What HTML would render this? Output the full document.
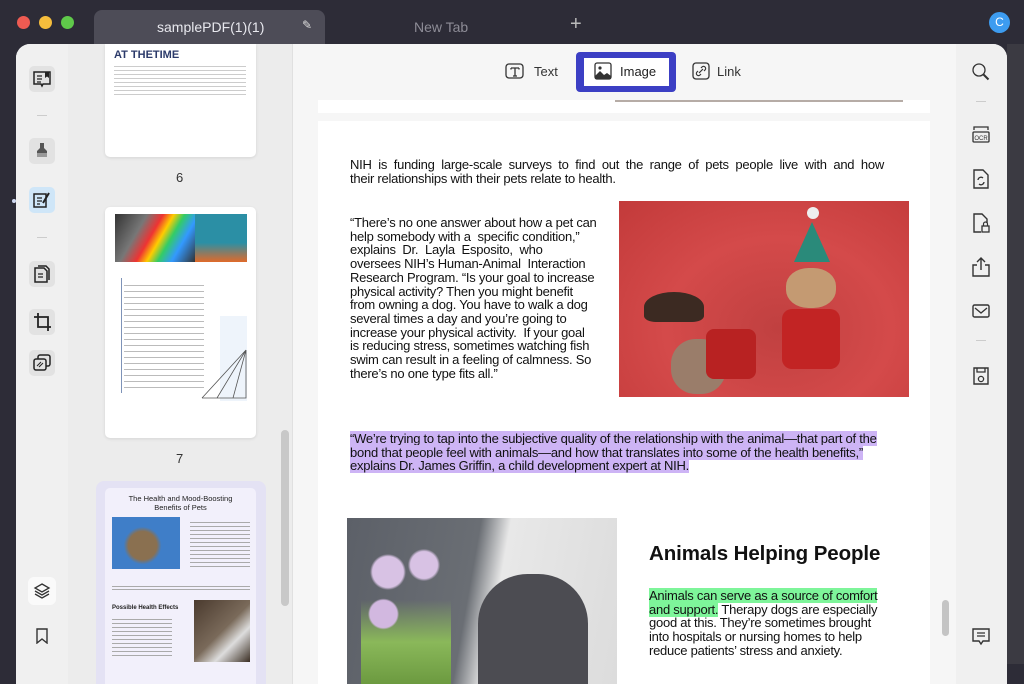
<!DOCTYPE html>
<html><head><meta charset="utf-8"><style>
*{box-sizing:border-box;margin:0;padding:0}
body{width:1024px;height:664px;overflow:hidden;background:#2d2c37;font-family:"Liberation Sans",Arial,sans-serif;position:relative}
.abs{position:absolute}
.dot{position:absolute;top:16px;width:13px;height:13px;border-radius:50%}
.win{position:absolute;left:16px;top:44px;width:991px;height:640px;background:#f1f1f1;border-radius:14px 14px 0 0;overflow:hidden}
.ico{position:absolute;width:26px;height:26px;border-radius:5px;background:#e2e2e2}
svg{position:absolute}
.p{position:absolute;font-size:13px;line-height:13.7px;color:#111;letter-spacing:-0.25px;white-space:nowrap}
.j{text-align:justify;text-align-last:justify;white-space:normal}
</style></head><body>
<div class="dot" style="left:17px;background:#ee5b52"></div>
<div class="dot" style="left:39px;background:#f5bd3c"></div>
<div class="dot" style="left:61px;background:#5fc94a"></div>
<div class="abs" style="left:94px;top:10px;width:231px;height:36px;background:#4d4c57;border-radius:8px 8px 0 0"></div>
<div class="abs" style="left:157px;top:19px;color:#e8e8ee;font-size:14px">samplePDF(1)(1)</div>
<div class="abs" style="left:302px;top:18px;color:#ddd;font-size:12px">✎</div>
<div class="abs" style="left:414px;top:19px;color:#8d8c96;font-size:14px">New Tab</div>
<div class="abs" style="left:570px;top:13px;color:#bbb;font-size:20px">+</div>
<div class="abs" style="left:989px;top:12px;width:21px;height:21px;border-radius:50%;background:#3d9cf0;color:#fff;font-size:12px;text-align:center;line-height:21px">C</div>
<div class="abs" style="left:12px;top:199px;width:4px;height:4px;border-radius:50%;background:#cfd8f0"></div>

<div class="win">
 <div class="abs" style="left:0;top:0;width:52px;height:640px;background:#f0f0f0"></div>
 <div class="ico" style="left:13px;top:22px"></div>
 <svg style="left:16px;top:26px" width="20" height="18" viewBox="0 0 20 18"><path d="M2 2h16v12H11l-1 2-1-2H2z" fill="none" stroke="#222" stroke-width="1.5"/><path d="M5 6h5M5 9h5M5 12h4" stroke="#222" stroke-width="1.3"/><path d="M13 2h4v6l-2-1.5-2 1.5z" fill="#222"/></svg>
 <div class="abs" style="left:21px;top:71px;width:10px;height:1px;background:#ccc"></div>
 <div class="ico" style="left:13px;top:94px"></div>
 <svg style="left:17px;top:97px" width="18" height="20" viewBox="0 0 18 20"><path d="M7 2l4 0 0 5 3 3v6H4v-6l3-3z" fill="#555"/><path d="M4 12h10v4H4z" fill="#999"/></svg>
 <div class="ico" style="left:13px;top:143px;background:#cfe6f8"></div>
 <svg style="left:16px;top:147px" width="20" height="18" viewBox="0 0 20 18"><path d="M2 3h12v13H2z" fill="none" stroke="#222" stroke-width="1.5"/><path d="M5 7h5M5 10h5M5 13h3" stroke="#222" stroke-width="1.3"/><path d="M11 12l6-10" stroke="#222" stroke-width="2"/></svg>
 <div class="abs" style="left:21px;top:193px;width:10px;height:1px;background:#ccc"></div>
 <div class="ico" style="left:13px;top:217px"></div>
 <svg style="left:17px;top:220px" width="18" height="20" viewBox="0 0 18 20"><path d="M2 4h9l3 3v11H2z" fill="none" stroke="#222" stroke-width="1.5"/><path d="M5 2h8l3 3v11" fill="none" stroke="#222" stroke-width="1.5"/><path d="M5 10h5M5 13h5" stroke="#222" stroke-width="1.3"/></svg>
 <div class="ico" style="left:13px;top:265px"></div>
 <svg style="left:17px;top:268px" width="20" height="20" viewBox="0 0 20 20"><path d="M5 1v14h13M1 5h14v14" fill="none" stroke="#222" stroke-width="1.8"/></svg>
 <div class="ico" style="left:13px;top:306px"></div>
 <svg style="left:16px;top:310px" width="20" height="18" viewBox="0 0 20 18"><rect x="6" y="1" width="12" height="11" rx="2" fill="none" stroke="#222" stroke-width="1.5"/><rect x="2" y="5" width="12" height="11" rx="2" fill="#e2e2e2" stroke="#222" stroke-width="1.5"/><path d="M5 12l4-4M7 13l4-4" stroke="#222" stroke-width="1"/></svg>
 <div class="abs" style="left:12px;top:533px;width:28px;height:28px;border-radius:6px;background:#fafafa"></div>
 <svg style="left:17px;top:538px" width="18" height="18" viewBox="0 0 18 18"><path d="M9 2l7 4-7 4-7-4z M2 9l7 4 7-4 M2 12l7 4 7-4" fill="none" stroke="#333" stroke-width="1.3"/></svg>
 <svg style="left:20px;top:584px" width="12" height="16" viewBox="0 0 12 16"><path d="M1 1h10v14l-5-4-5 4z" fill="none" stroke="#333" stroke-width="1.4"/></svg>

 <div class="abs" style="left:52px;top:0;width:224px;height:640px;background:#ececec"></div>
 <div class="abs" style="left:89px;top:0;width:151px;height:113px;background:#fff;border-radius:0 0 5px 5px;box-shadow:0 1px 3px rgba(0,0,0,.1)"></div>
 <div class="abs" style="left:98px;top:5px;font-size:11px;font-weight:bold;color:#2b3a6a">AT THETIME</div>
 <div class="abs" style="left:98px;top:20px;width:132px;height:32px;background:repeating-linear-gradient(#fff 0 2px,#ccc 2px 3px,#fff 3px 4px)"></div>
 <div class="abs" style="left:160px;top:126px;font-size:13px;color:#333">6</div>
 <div class="abs" style="left:89px;top:163px;width:151px;height:231px;background:#fff;border-radius:5px;box-shadow:0 1px 3px rgba(0,0,0,.1)"></div>
 <div class="abs" style="left:99px;top:170px;width:80px;height:48px;background:linear-gradient(120deg,#333,#777 30%,#e33 45%,#fc0 55%,#3c6 65%,#39f 78%,#333)"></div>
 <div class="abs" style="left:179px;top:170px;width:52px;height:48px;background:linear-gradient(#2b8fa5 60%,#e06a2a)"></div>
 <div class="abs" style="left:105px;top:234px;width:1px;height:115px;background:#7e93b8"></div>
 <div class="abs" style="left:108px;top:238px;width:80px;height:110px;background:repeating-linear-gradient(#fff 0 3px,#bbb 3px 4px,#fff 4px 6px)"></div>
 <div class="abs" style="left:204px;top:272px;width:27px;height:85px;background:#eef4fb"></div>
 <svg style="left:184px;top:300px" width="48" height="58"><path d="M2 54L46 6 M17 54L46 6 M33 54L46 6 M2 54H46V6" fill="none" stroke="#555" stroke-width="0.8"/></svg>
 <div class="abs" style="left:160px;top:407px;font-size:13px;color:#333">7</div>
 <div class="abs" style="left:80px;top:437px;width:170px;height:210px;background:#e4e2f4;border-radius:8px"></div>
 <div class="abs" style="left:89px;top:444px;width:151px;height:200px;background:#f2f0fb;border-radius:5px"></div>
 <div class="abs" style="left:89px;top:450px;width:151px;text-align:center;font-size:7.5px;line-height:9px;color:#222">The Health and Mood-Boosting<br>Benefits of Pets</div>
 <div class="abs" style="left:96px;top:473px;width:68px;height:52px;background:radial-gradient(circle at 45% 55%,#8a7050 0 30%,#3f7ec8 40%)"></div>
 <div class="abs" style="left:174px;top:476px;width:60px;height:50px;background:repeating-linear-gradient(#f2f0fb 0 2px,#aaa 2px 3px,#f2f0fb 3px 4px)"></div>
 <div class="abs" style="left:96px;top:540px;width:138px;height:6px;background:repeating-linear-gradient(#f2f0fb 0 2px,#aaa 2px 3px)"></div>
 <div class="abs" style="left:96px;top:561px;font-size:6px;font-weight:bold;color:#222">Possible Health Effects</div>
 <div class="abs" style="left:96px;top:573px;width:60px;height:40px;background:repeating-linear-gradient(#f2f0fb 0 2px,#aaa 2px 3px,#f2f0fb 3px 4px)"></div>
 <div class="abs" style="left:178px;top:556px;width:56px;height:62px;background:linear-gradient(135deg,#4a3a2e,#7a6a5a 50%,#ddd 70%,#3a2d22)"></div>
 <div class="abs" style="left:265px;top:386px;width:8px;height:176px;border-radius:4px;background:#c8c8c8"></div>
 <div class="abs" style="left:276px;top:0;width:1px;height:640px;background:#e0e0e0"></div>

 <div class="abs" style="left:277px;top:0;width:663px;height:640px;background:#f6f6f6"></div>
 <svg style="left:489px;top:18px" width="20" height="18" viewBox="0 0 20 18"><rect x="1" y="2" width="17" height="14" rx="3" fill="none" stroke="#333" stroke-width="1.3"/><path d="M6 6h8M10 6v8M8 14h4M6 6v1.5M14 6v1.5" stroke="#333" stroke-width="1.3" fill="none"/></svg>
 <div class="abs" style="left:518px;top:20px;font-size:13px;color:#333">Text</div>
 <div class="abs" style="left:560px;top:8px;width:100px;height:40px;background:#3c3fc4;border-radius:4px"></div>
 <div class="abs" style="left:568px;top:14px;width:85px;height:28px;background:#fff"></div>
 <svg style="left:578px;top:18px" width="18" height="18" viewBox="0 0 18 18"><rect x="1" y="1" width="16" height="16" rx="2" fill="none" stroke="#333" stroke-width="1.3"/><path d="M1 14l5-5 4 4 3-2 4 3v3H1z" fill="#333"/><circle cx="6" cy="6" r="1.6" fill="#333"/></svg>
 <div class="abs" style="left:604px;top:20px;font-size:13px;color:#222">Image</div>
 <svg style="left:676px;top:18px" width="18" height="18" viewBox="0 0 18 18"><rect x="1" y="1" width="16" height="16" rx="3" fill="none" stroke="#333" stroke-width="1.3"/><path d="M7 11l4-4M6 9l-1 1a2 2 0 003 3l1-1M12 9l1-1a2 2 0 00-3-3l-1 1" fill="none" stroke="#333" stroke-width="1.2"/></svg>
 <div class="abs" style="left:701px;top:20px;font-size:13px;color:#333">Link</div>
 <div class="abs" style="left:302px;top:56px;width:612px;height:13px;background:#fff"></div>
 <div class="abs" style="left:599px;top:56px;width:288px;height:2px;background:#b6aca6"></div>
 <div class="abs" style="left:302px;top:77px;width:612px;height:563px;background:#fff"></div>
 <div class="abs" style="left:926px;top:556px;width:7px;height:36px;border-radius:4px;background:#c4c4c4"></div>

 <div class="p j" style="left:334px;top:114px;width:534px">NIH is funding large-scale surveys to find out the range of pets people live with and how</div>
 <div class="p" style="left:334px;top:128px">their relationships with their pets relate to health.</div>
 <div class="p" style="left:334px;top:172px">“There’s no one answer about how a pet can<br>help somebody with a&nbsp; specific condition,”<br>explains&nbsp; Dr.&nbsp; Layla&nbsp; Esposito,&nbsp; who<br>oversees NIH’s Human-Animal&nbsp; Interaction<br>Research Program. “Is your goal to increase<br>physical activity? Then you might benefit<br>from owning a dog. You have to walk a dog<br>several times a day and you’re going to<br>increase your physical activity.&nbsp; If your goal<br>is reducing stress, sometimes watching fish<br>swim can result in a feeling of calmness. So<br>there’s no one type fits all.”</div>
 <div class="abs" style="left:603px;top:157px;width:290px;height:196px;background:radial-gradient(ellipse at 55% 65%,#c04040 0,#d44a4a 50%,#c23a3a 100%)"></div>
 <div class="abs" style="left:628px;top:248px;width:60px;height:30px;border-radius:50% 50% 20% 20%;background:#3c2a22"></div>
 <div class="abs" style="left:655px;top:295px;width:55px;height:55px;border-radius:45%;background:#9a7d6a"></div>
 <div class="abs" style="left:690px;top:285px;width:50px;height:50px;background:#b82222;border-radius:8px"></div>
 <div class="abs" style="left:770px;top:224px;width:50px;height:40px;border-radius:45%;background:#c49a72"></div>
 <div class="abs" style="left:766px;top:265px;width:58px;height:60px;background:#c22424;border-radius:10px"></div>
 <div class="abs" style="left:778px;top:178px;width:36px;height:40px;background:#2a8a7a;clip-path:polygon(50% 0,100% 100%,0 100%)"></div>
 <div class="abs" style="left:791px;top:163px;width:12px;height:12px;border-radius:50%;background:#eee"></div>
 <div class="p" style="left:334px;top:388px"><span style="background:#cdb4f5">“We’re trying to tap into the subjective quality of the relationship with the animal—that part of the</span><br><span style="background:#cdb4f5">bond that people feel with animals—and how that translates into some of the health benefits,”</span><br><span style="background:#cdb4f5">explains Dr. James Griffin, a child development expert at NIH.</span></div>
 <div class="abs" style="left:331px;top:474px;width:270px;height:166px;background:linear-gradient(100deg,#5c6068 0,#6a6e74 45%,#e8e8e8 55%,#dcdcdc 100%)"></div>
 <div class="abs" style="left:345px;top:500px;width:90px;height:140px;background:radial-gradient(circle at 30% 20%,#d8c2e4 0 12%,transparent 14%),radial-gradient(circle at 70% 15%,#d8c2e4 0 10%,transparent 12%),radial-gradient(circle at 25% 50%,#d2b8e0 0 14%,transparent 16%),linear-gradient(#0000 40%,#8ab85a 70%,#6c9a40)"></div>
 <div class="abs" style="left:462px;top:530px;width:110px;height:110px;border-radius:45% 45% 0 0;background:#4c4c52"></div>
 <div class="abs" style="left:633px;top:498px;font-size:20.5px;font-weight:bold;color:#111;letter-spacing:-0.1px">Animals Helping People</div>
 <div class="p" style="left:633px;top:545px"><span style="background:#7ef59a">Animals can serve as a source of comfort</span><br><span style="background:#7ef59a">and support.</span> Therapy dogs are especially<br>good at this. They’re sometimes brought<br>into hospitals or nursing homes to help<br>reduce patients’ stress and anxiety.</div>

 <div class="abs" style="left:940px;top:0;width:51px;height:640px;background:#f0f0f0"></div>
 <svg style="left:955px;top:18px" width="20" height="20" viewBox="0 0 20 20"><circle cx="8" cy="8" r="6" fill="none" stroke="#333" stroke-width="1.3"/><path d="M12.5 12.5l5 5" stroke="#333" stroke-width="2"/></svg>
 <div class="abs" style="left:960px;top:57px;width:10px;height:1px;background:#ccc"></div>
 <svg style="left:955px;top:80px" width="20" height="20" viewBox="0 0 20 20"><path d="M3 6V3h14v3" fill="none" stroke="#333" stroke-width="1.3"/><rect x="2" y="8" width="16" height="10" rx="1" fill="none" stroke="#333" stroke-width="1.3"/><text x="10" y="16" font-size="6" text-anchor="middle" font-family="Liberation Sans" fill="#333">OCR</text></svg>
 <svg style="left:956px;top:124px" width="18" height="22" viewBox="0 0 18 22"><path d="M2 2h9l5 5v13H2z" fill="none" stroke="#333" stroke-width="1.4"/><path d="M6 12a3 3 0 015-2M12 14a3 3 0 01-5 2" fill="none" stroke="#333" stroke-width="1.3"/></svg>
 <svg style="left:956px;top:168px" width="18" height="22" viewBox="0 0 18 22"><path d="M9 20H2V2h8l5 5v4" fill="none" stroke="#333" stroke-width="1.4"/><rect x="10" y="14" width="7" height="6" fill="none" stroke="#333" stroke-width="1.3"/><path d="M11.5 14v-2a2 2 0 014 0v2" fill="none" stroke="#333" stroke-width="1.2"/></svg>
 <svg style="left:955px;top:212px" width="20" height="22" viewBox="0 0 20 22"><path d="M6 9H2v11h16V9h-4M10 14V2M6 6l4-4 4 4" fill="none" stroke="#333" stroke-width="1.4"/></svg>
 <svg style="left:955px;top:258px" width="20" height="18" viewBox="0 0 20 18"><rect x="2" y="3" width="16" height="12" rx="1.5" fill="none" stroke="#333" stroke-width="1.4"/><path d="M4 6l6 5 6-5" fill="none" stroke="#333" stroke-width="1.3"/></svg>
 <div class="abs" style="left:960px;top:296px;width:10px;height:1px;background:#ccc"></div>
 <svg style="left:956px;top:322px" width="18" height="20" viewBox="0 0 18 20"><path d="M2 2h14v16H2z" fill="none" stroke="#333" stroke-width="1.4"/><path d="M5 2v4h8V2" fill="none" stroke="#333" stroke-width="1.3"/><circle cx="9" cy="13" r="2.6" fill="none" stroke="#333" stroke-width="1.3"/></svg>
 <svg style="left:955px;top:583px" width="20" height="20" viewBox="0 0 20 20"><path d="M2 2h16v12h-6l-2 3-2-3H2z" fill="none" stroke="#333" stroke-width="1.4"/><path d="M6 6h8M6 9h8" stroke="#333" stroke-width="1.3"/></svg>
</div>
<div class="abs" style="left:1007px;top:44px;width:17px;height:620px;background:#3b3a42"></div>
</body></html>
